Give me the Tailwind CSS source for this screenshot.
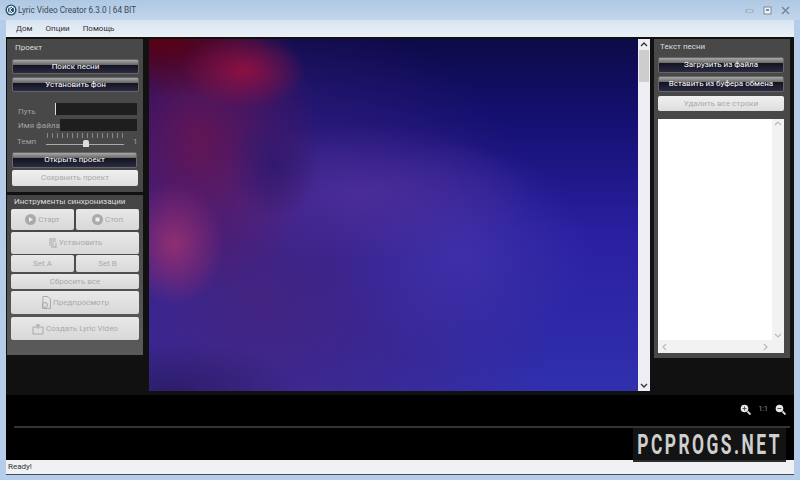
<!DOCTYPE html>
<html lang="ru">
<head>
    <meta charset="UTF-8">
    <title>Lyric Video Creator</title>
    <script src="https://cdn.jsdelivr.net/npm/@tailwindcss/browser@4"></script>
</head>
<body class="w-[800px] h-[480px] overflow-hidden bg-[#b5cde8] font-['Roboto','Liberation_Sans',sans-serif] text-[8px] relative">
    <!-- title bar -->
    <div class="h-[20px] flex items-center pl-[5px] pr-[10px] bg-gradient-to-b from-[#aec8e4] to-[#c2d6ec]">
        <svg class="w-[12px] h-[12px] mr-[1px]" viewBox="0 0 12 12"><circle cx="6" cy="6" r="5.500" fill="#1d4a6b"/><circle cx="6" cy="6" r="3.600" fill="none" stroke="#e8f0f6" stroke-width="1.200"/><path d="M5 3v6M5 6l3-3M5 6l3 3" stroke="#e8f0f6" stroke-width="1" fill="none"/></svg>
        <span class="text-[8.200px] text-[#3a4753]">Lyric Video Creator 6.3.0 | 64 BIT</span>
        <div class="ml-auto flex items-center gap-[9px]">
            <svg class="w-[9px] h-[9px]" viewBox="0 0 9 9"><rect x="1" y="4" width="7" height="2" fill="#eef3f8" stroke="#7a8a9a" stroke-width=".7"/></svg>
            <svg class="w-[9px] h-[9px]" viewBox="0 0 9 9"><rect x="1" y="1" width="7" height="7" fill="#eef3f8" stroke="#7a8a9a"/><rect x="3" y="3" width="3" height="2" fill="#7a8a9a"/></svg>
            <svg class="w-[9px] h-[9px]" viewBox="0 0 9 9"><path d="M1 1l7 7M8 1l-7 7" stroke="#7a8a9a" stroke-width="1.600"/></svg>
        </div>
    </div>
    <div class="mx-[6px] flex flex-col">
        <!-- menu -->
        <div class="h-[17px] bg-gradient-to-b from-[#d8e5f2] to-[#eaf0f6] flex items-center pl-[10px] gap-[13px] text-[#333]">
            <span>Дом</span><span>Опции</span><span>Помощь</span>
        </div>
        <!-- main -->
        <div class="h-[358px] bg-[#111] flex pt-[2px] pl-[1px]">
            <!-- left column -->
            <div class="w-[136px] flex flex-col gap-[3px]">
                <div class="h-[153px] bg-[#484848] pl-[5px] pr-[4px] flex flex-col">
                    <div class="h-[20px] pl-[3px] pt-[2px] text-[#ddd] leading-[13px]">Проект</div>
                    <button class="h-[15px] shrink-0 pt-[1px] rounded-[2px] border border-[#666] bg-[linear-gradient(#a8a8a8_0,#6a6a6a_35%,#12121f_36%,#2a2a42_100%)] text-white leading-none">Поиск песни</button>
                    <button class="h-[15px] shrink-0 pt-[1px] mt-[3px] rounded-[2px] border border-[#666] bg-[linear-gradient(#a8a8a8_0,#6a6a6a_35%,#12121f_36%,#2a2a42_100%)] text-white leading-none">Установить фон</button>
                    <div class="h-[12px] mt-[11px] flex items-center justify-between pr-[2px]">
                        <span class="pl-[6px] pt-[6px] text-[#a0a0a0]">Путь</span>
                        <div class="w-[82px] h-[12px] bg-[#1e1e1e] border-l border-[#ddd]"></div>
                    </div>
                    <div class="h-[12px] mt-[4px] flex items-center justify-between pr-[2px]">
                        <span class="pl-[6px] pt-[2px] text-[#a0a0a0] whitespace-nowrap">Имя файла</span>
                        <div class="w-[79px] h-[12px] bg-[#1e1e1e]"></div>
                    </div>
                    <div class="h-[16px] mt-[1px] flex items-center">
                        <span class="w-[34px] pl-[5px] pt-[3px] text-[#a0a0a0]">Темп</span>
                        <div class="w-[78px] h-[16px] relative">
                            <div class="absolute left-[1px] right-0 top-[1px] h-[5px] bg-[repeating-linear-gradient(90deg,#888_0,#888_1px,transparent_1px,transparent_5px)]"></div>
                            <div class="absolute left-0 right-0 top-[12px] h-[1px] bg-[#aaa]"></div>
                            <div class="absolute left-[37px] top-[8px] w-[6px] h-[7px] bg-[#ddd] rounded-t-[2px]"></div>
                        </div>
                        <span class="ml-[9px] pt-[3px] text-[#a0a0a0]">1</span>
                    </div>
                    <button class="h-[16px] shrink-0 mt-[4px] mr-[2px] rounded-[2px] border border-[#666] bg-[linear-gradient(#a8a8a8_0,#6a6a6a_35%,#12121f_36%,#2a2a42_100%)] text-white leading-none">Открыть проект</button>
                    <button class="h-[16px] shrink-0 mt-[2px] mr-[1px] rounded-[2px] bg-[linear-gradient(#f0f0f0,#dedede)] text-[#aaa] leading-none">Сохранить проект</button>
                </div>
                <div class="h-[160px] bg-[linear-gradient(#444,#5a5a5a)] px-[4px] flex flex-col">
                    <div class="h-[14px] shrink-0 pl-[3px] text-[#ddd] leading-[14px] whitespace-nowrap">Инструменты синхронизации</div>
                    <div class="h-[21px] shrink-0 flex gap-[2px]">
                        <button class="flex-1 rounded-[2px] bg-[linear-gradient(#e8e8e8,#d8d8d8)] text-[#aaa] flex items-center justify-center gap-[2px]">
                            <svg class="w-[11px] h-[11px]" viewBox="0 0 11 11"><circle cx="5.500" cy="5.500" r="5.500" fill="#aaa"/><path d="M4 3l4 2.500L4 8z" fill="#eee"/></svg>Старт
                        </button>
                        <button class="flex-1 rounded-[2px] bg-[linear-gradient(#e8e8e8,#d8d8d8)] text-[#aaa] flex items-center justify-center gap-[2px]">
                            <svg class="w-[11px] h-[11px]" viewBox="0 0 11 11"><circle cx="5.500" cy="5.500" r="5.500" fill="#aaa"/><rect x="3.500" y="3.500" width="4" height="4" fill="#eee"/></svg>Стоп
                        </button>
                    </div>
                    <button class="h-[22px] shrink-0 mt-[2px] rounded-[2px] bg-[linear-gradient(#e8e8e8,#d8d8d8)] text-[#aaa] flex items-center justify-center gap-[1px]">
                        <svg class="w-[10px] h-[11px]" viewBox="0 0 10 11"><path d="M1 1h7M1 3h7M1 5h5M1 7h5M3 9h5M8 5v5" stroke="#aaa" fill="none"/></svg>Установить
                    </button>
                    <div class="h-[17px] shrink-0 mt-[1px] flex gap-[2px]">
                        <button class="flex-1 rounded-[2px] bg-[linear-gradient(#e8e8e8,#d8d8d8)] text-[#aaa] leading-none">Set A</button>
                        <button class="flex-1 rounded-[2px] bg-[linear-gradient(#e8e8e8,#d8d8d8)] text-[#aaa] leading-none">Set B</button>
                    </div>
                    <button class="h-[15px] shrink-0 mt-[2px] rounded-[2px] bg-[linear-gradient(#e8e8e8,#d8d8d8)] text-[#aaa] leading-none">Сбросить все</button>
                    <button class="h-[23px] shrink-0 mt-[2px] rounded-[2px] bg-[linear-gradient(#e8e8e8,#d8d8d8)] text-[#aaa] flex items-center justify-center gap-[2px]">
                        <svg class="w-[10px] h-[13px]" viewBox="0 0 10 13"><path d="M2 .5h5l2.500 2.500v9.500h-8z" fill="none" stroke="#aaa"/><circle cx="4" cy="9" r="2.500" fill="none" stroke="#aaa"/></svg>Предпросмотр
                    </button>
                    <button class="h-[23px] shrink-0 mt-[3px] rounded-[2px] bg-[linear-gradient(#e8e8e8,#d8d8d8)] text-[#aaa] flex items-center justify-center gap-[2px]">
                        <svg class="w-[12px] h-[12px]" viewBox="0 0 12 12"><path d="M1 4h10v7H1zM6 1v5M4 3l2-2 2 2" fill="none" stroke="#aaa"/></svg>Создать Lyric Video
                    </button>
                </div>
            </div>
            <!-- canvas -->
            <div class="ml-[6px] w-[489px] h-[352px] bg-[radial-gradient(ellipse_62px_38px_at_95px_32px,#921040f0,transparent),radial-gradient(ellipse_50px_62px_at_25px_205px,#942f72f0,transparent),radial-gradient(ellipse_110px_60px_at_15px_0px,#5c0012,transparent),radial-gradient(ellipse_45px_55px_at_125px_125px,#2c186cd0,transparent),radial-gradient(ellipse_120px_160px_at_50px_100px,#6a1550e0,transparent),radial-gradient(ellipse_170px_70px_at_210px_155px,#4e2e9ae0,transparent),radial-gradient(ellipse_130px_110px_at_310px_215px,#4034aec0,transparent),radial-gradient(ellipse_130px_50px_at_20px_352px,#2a1a60d0,transparent),radial-gradient(ellipse_300px_300px_at_110px_260px,#44247ef0,transparent),linear-gradient(#0d0a48_0,#141070_22%,#2a1fa0_55%,#3030ae_100%)]"></div>
            <!-- scrollbar -->
            <div class="w-[12px] h-[352px] bg-[#eeeef4] flex flex-col items-center">
                <svg class="w-[8px] h-[11px] shrink-0" viewBox="0 0 8 11"><path d="M1 7l3-3 3 3" fill="none" stroke="#333" stroke-width="1.300"/></svg>
                <div class="w-[10px] h-[32px] bg-[#cdcdcd]"></div>
                <svg class="w-[8px] h-[11px] mt-auto" viewBox="0 0 8 11"><path d="M1 4l3 3 3-3" fill="none" stroke="#333" stroke-width="1.300"/></svg>
            </div>
            <!-- right -->
            <div class="ml-[4px] w-[136px] h-[319px] bg-[#484848] pl-[4px] pr-[6px] flex flex-col">
                <div class="h-[18px] shrink-0 pl-[2px] pt-[1px] text-[#ddd] leading-[13px]">Текст песни</div>
                <button class="h-[16px] shrink-0 rounded-[2px] border border-[#666] bg-[linear-gradient(#a8a8a8_0,#6a6a6a_35%,#12121f_36%,#2a2a42_100%)] text-white leading-none">Загрузить из файла</button>
                <button class="h-[16px] shrink-0 mt-[3px] rounded-[2px] border border-[#666] bg-[linear-gradient(#a8a8a8_0,#6a6a6a_35%,#12121f_36%,#2a2a42_100%)] text-white leading-none">Вставить из буфера обмена</button>
                <button class="h-[15px] shrink-0 mt-[4px] rounded-[2px] bg-[linear-gradient(#f0f0f0,#dedede)] text-[#aaa] leading-none">Удалить все строки</button>
                <div class="h-[234px] shrink-0 mt-[8px] bg-white flex flex-col">
                    <div class="flex-1 flex justify-end">
                        <div class="w-[12px] bg-[#f2f2f2] flex flex-col items-center justify-between">
                            <svg class="w-[8px] h-[10px]" viewBox="0 0 8 10"><path d="M1 6l3-3 3 3" fill="none" stroke="#bbb" stroke-width="1.200"/></svg>
                            <svg class="w-[8px] h-[10px]" viewBox="0 0 8 10"><path d="M1 4l3 3 3-3" fill="none" stroke="#bbb" stroke-width="1.200"/></svg>
                        </div>
                    </div>
                    <div class="h-[13px] bg-[#f2f2f2] flex items-center justify-between pl-[3px] pr-[15px]">
                        <svg class="w-[8px] h-[8px]" viewBox="0 0 8 8"><path d="M5 1L2 4l3 3" fill="none" stroke="#bbb" stroke-width="1.200"/></svg>
                        <svg class="w-[8px] h-[8px]" viewBox="0 0 8 8"><path d="M3 1l3 3-3 3" fill="none" stroke="#bbb" stroke-width="1.200"/></svg>
                    </div>
                </div>
            </div>
        </div>
        <!-- timeline -->
        <div class="h-[65px] bg-black relative">
            <div class="absolute left-[8px] right-[4px] top-[31px] h-[2px] bg-[#333]"></div>
            <div class="absolute right-[8px] top-[9px] flex items-center gap-[7px] text-[#999] text-[7px]">
                <svg class="w-[11px] h-[11px]" viewBox="0 0 11 11"><circle cx="4.500" cy="4.500" r="3.800" fill="#e8e8e8"/><path d="M2.500 4.500h4M4.500 2.500v4" stroke="#556"/><path d="M7.500 7.500l3 3" stroke="#ddd" stroke-width="1.800"/></svg>
                <span>1:1</span>
                <svg class="w-[11px] h-[11px]" viewBox="0 0 11 11"><circle cx="4.500" cy="4.500" r="3.800" fill="#e8e8e8"/><path d="M2.500 4.500h4" stroke="#556"/><path d="M7.500 7.500l3 3" stroke="#ddd" stroke-width="1.800"/></svg>
            </div>
        </div>
        <!-- status -->
        <div class="h-[15px] bg-[#eff1f3] flex items-center pl-[2px] text-[#333] border-b border-[#3f4f60]">Ready!</div>
    </div>
    <!-- watermark -->
    <div class="absolute left-[633px] top-[428px] w-[153px] h-[34px] bg-[#151515]/90 flex items-center justify-center overflow-hidden">
        <span class="font-['Roboto','Liberation_Sans',sans-serif] font-bold text-[28px] tracking-[4px] text-[#cfcfcf] scale-x-[0.62] whitespace-nowrap">PCPROGS.NET</span>
    </div>
</body>
</html>
